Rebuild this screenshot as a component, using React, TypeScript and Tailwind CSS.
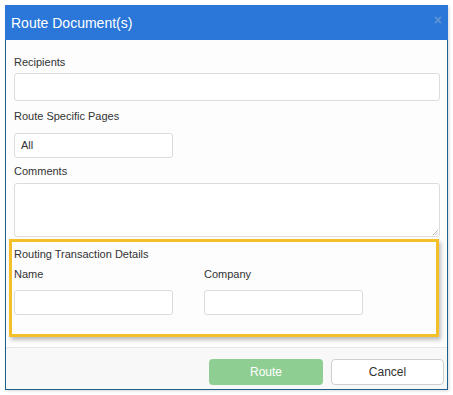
export default function App() {
  return (
    <div className="w-[453px] h-[395px] bg-white p-[5px]" style={{ fontFamily: '"Liberation Sans", Arial, sans-serif' }}>
      <div className="w-[443px] h-[385px] flex flex-col border-x border-b border-[#1f5f8b] shadow-[1px_1px_3px_rgba(0,0,0,0.15)]">
        {/* Header */}
        <div className="h-[35px] -mx-px flex items-center justify-between bg-[#2a77d9] pl-[6px] pr-[6px]">
          <span className="text-[14px] text-white leading-none">Route Document(s)</span>
          <span className="text-[14px] font-bold leading-none text-[#5f93d4] mb-[6px]">×</span>
        </div>

        {/* Body */}
        <div className="flex-1 bg-[#fdfdfd] px-2 pt-[15px] text-[11px] leading-[15px] text-[#333]">
          <div>Recipients</div>
          <div className="mt-[3px] h-[28px] w-[426px] rounded-[3px] border border-[#dcdcdc] bg-white" />

          <div className="mt-[8px]">Route Specific Pages</div>
          <div className="mt-[9px] h-[25px] w-[159px] rounded-[3px] border border-[#dcdcdc] bg-white flex items-center px-[6px]">
            All
          </div>

          <div className="mt-[6px]">Comments</div>
          <div className="relative mt-[4px] h-[54px] w-[426px] rounded-[3px] border border-[#dcdcdc] bg-white">
            <svg className="absolute right-[1px] bottom-[1px]" width="6" height="6" viewBox="0 0 6 6">
              <path d="M1 6L6 1M3.5 6L6 3.5" stroke="#aaa" strokeWidth="0.8" />
            </svg>
          </div>

          <div className="-ml-[5px] mt-[2px] h-[98px] w-[430px] border-[3px] border-[#f4c029] pl-[2px] pt-[5px] shadow-[2px_3px_4px_rgba(0,0,0,0.25)]">
            <div>Routing Transaction Details</div>
            <div className="mt-[5px] flex">
              <div className="w-[190px]">
                <div>Name</div>
                <div className="mt-[8px] h-[25px] w-[159px] rounded-[3px] border border-[#dcdcdc] bg-white" />
              </div>
              <div>
                <div>Company</div>
                <div className="mt-[8px] h-[25px] w-[159px] rounded-[3px] border border-[#dcdcdc] bg-white" />
              </div>
            </div>
          </div>
        </div>

        {/* Footer */}
        <div className="h-[42px] border-t border-[#e6e6e6] bg-[#f8f8f8] flex justify-end items-start pt-[11px] pr-[3px] gap-[8px]">
          <button className="h-[26px] w-[114px] rounded-[4px] bg-[#8fce92] text-[12px] text-white">Route</button>
          <button className="h-[26px] w-[113px] rounded-[4px] border border-[#cfcfcf] bg-white text-[12px] text-[#333]">Cancel</button>
        </div>
      </div>
    </div>
  )
}
